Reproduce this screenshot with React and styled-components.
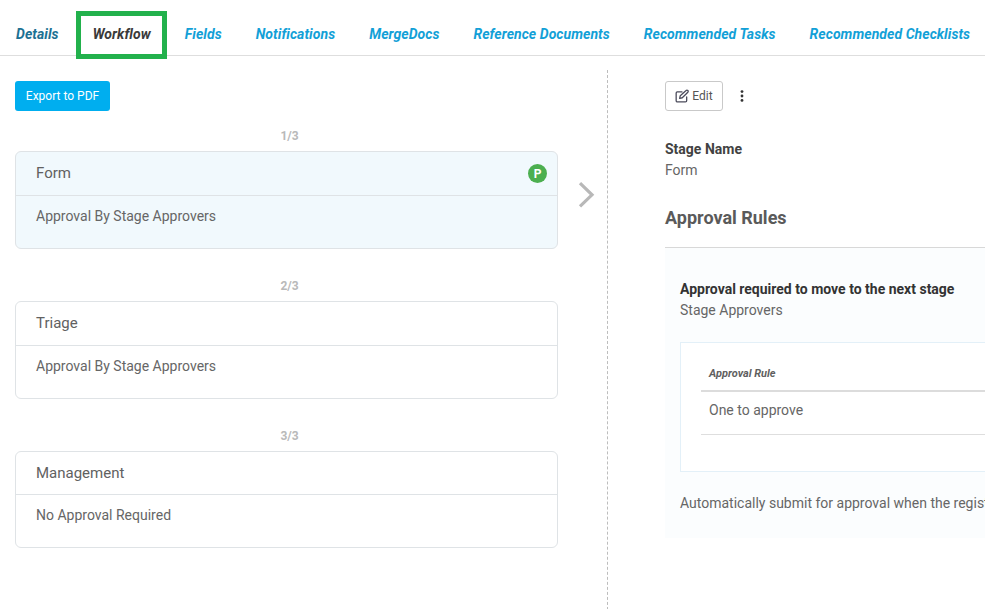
import React from "react"
import styled, { createGlobalStyle } from "styled-components"

const GlobalStyle = createGlobalStyle`
  html, body {
    margin: 0;
    padding: 0;
    background: #fff;
    overflow: hidden;
  }
  body {
    font-family: Roboto, "Liberation Sans", sans-serif;
    font-size: 14px;
    color: #5f6368;
  }
`

const Page = styled.div`
  width: 985px;
  height: 609px;
  overflow: hidden;
`

const TabBar = styled.nav`
  display: flex;
  height: 55px;
  padding-left: 16px;
  border-bottom: 1px solid #dedede;
`

const Tab = styled.a`
  position: relative;
  flex: none;
  margin-right: 34px;
  padding-top: 26px;
  font-size: 14px;
  line-height: 17px;
  font-weight: 700;
  font-style: italic;
  letter-spacing: 0.06px;
  white-space: nowrap;
  color: ${props => props.$color};

  ${props => props.$boxed && `
    &::after {
      content: "";
      position: absolute;
      left: -17px;
      right: -16px;
      top: 11px;
      height: 38px;
      border: 5px solid #22b14c;
    }
  `}
`

const Body = styled.div`
  display: flex;
`

const LeftColumn = styled.section`
  flex: none;
  width: 543px;
  padding: 25px 0 0 15px;
`

const ExportButton = styled.button`
  display: block;
  width: 95px;
  height: 30px;
  padding: 0;
  border: 0;
  border-radius: 3px;
  background: #00aeef;
  color: #fff;
  font-family: inherit;
  font-size: 12px;
`

const Counter = styled.div`
  margin-top: ${props => (props.$first ? "18px" : "30px")};
  margin-bottom: 7px;
  padding-left: 6px;
  height: 15px;
  font-size: 12px;
  line-height: 15px;
  font-weight: 700;
  text-align: center;
  color: #b9b9b9;
`

const StageCard = styled.article`
  box-sizing: border-box;
  height: ${props => (props.$short ? "97px" : "98px")};
  border: 1px solid #dfe3e6;
  border-radius: 6px;
  background: ${props => (props.$active ? "#f1f9fd" : "#fff")};
`

const StageHeader = styled.header`
  box-sizing: border-box;
  display: flex;
  align-items: center;
  justify-content: space-between;
  height: ${props => (props.$short ? "43px" : "44px")};
  padding: 0 10px 0 20px;
  border-bottom: 1px solid #dfe3e6;
`

const StageName = styled.span`
  margin-bottom: ${props => (props.$short ? "0" : "2px")};
  font-size: 15px;
  color: #616161;
`

const Badge = styled.span`
  display: flex;
  align-items: center;
  justify-content: center;
  width: 19px;
  height: 19px;
  border-radius: 50%;
  background: #4caf50;
  color: #fff;
  font-size: 12px;
  font-weight: 700;
`

const StageRule = styled.p`
  margin: 0;
  padding: 12px 20px 0;
  font-size: 14px;
  line-height: 17px;
  color: #666;
`

const ArrowColumn = styled.div`
  flex: none;
  width: 49px;
  padding: 126px 0 0 20px;
  box-sizing: border-box;
`

const DetailPane = styled.section`
  flex: none;
  width: 378px;
  height: 539px;
  margin-top: 14px;
  padding: 11px 0 0 57px;
  border-left: 1px dashed #bdbdbd;
  overflow: hidden;
`

const DetailInner = styled.div`
  width: 400px;
`

const Toolbar = styled.div`
  display: flex;
  align-items: center;
  height: 30px;
`

const EditButton = styled.button`
  display: flex;
  align-items: center;
  justify-content: center;
  gap: 3px;
  width: 58px;
  height: 30px;
  padding: 0;
  border: 1px solid #c9c9c9;
  border-radius: 3px;
  background: #fff;
  color: #555;
  font-family: inherit;
  font-size: 12px;
`

const MoreButton = styled.span`
  display: flex;
  margin-left: 17px;
  color: #333;
`

const FieldLabel = styled.div`
  margin-top: 29px;
  font-size: 14px;
  line-height: 18px;
  font-weight: 700;
  color: #424242;
`

const FieldValue = styled.div`
  margin-top: 3px;
  font-size: 14px;
  line-height: 18px;
  color: #666;
`

const SectionTitle = styled.h2`
  margin: 28px 0 0;
  padding-bottom: 18px;
  border-bottom: 1px solid #d8d8d8;
  font-size: 18px;
  line-height: 22px;
  font-weight: 700;
  color: #5a5a5a;
`

const RulePanel = styled.div`
  padding: 32px 0 0 15px;
  height: 258px;
  background: #fbfdfe;
`

const RuleTitle = styled.div`
  font-size: 14px;
  line-height: 18px;
  font-weight: 700;
  color: #333;
`

const RuleSub = styled.div`
  margin-top: 3px;
  font-size: 14px;
  line-height: 18px;
  color: #666;
`

const RuleBox = styled.div`
  box-sizing: border-box;
  height: 130px;
  margin-top: 23px;
  padding: 0 0 0 20px;
  border: 1px solid #e3f0f8;
  background: #fff;
`

const RuleHeading = styled.div`
  box-sizing: border-box;
  height: 49px;
  padding: 24px 0 0 8px;
  border-bottom: 2px solid #dcdcdc;
  font-size: 11px;
  line-height: 14px;
  font-weight: 700;
  font-style: italic;
  color: #5f5f5f;
`

const RuleCell = styled.div`
  box-sizing: border-box;
  height: 43px;
  padding: 9px 0 0 8px;
  border-bottom: 1px solid #dedede;
  font-size: 14px;
  line-height: 18px;
  color: #666;
`

const AutoNote = styled.div`
  margin-top: 22px;
  font-size: 14px;
  line-height: 18px;
  white-space: nowrap;
  color: #666;
`

const tabs = [
  { label: "Details", color: "#1c7193" },
  { label: "Workflow", color: "#3a3a3a", boxed: true },
  { label: "Fields", color: "#12a0d7" },
  { label: "Notifications", color: "#12a0d7" },
  { label: "MergeDocs", color: "#12a0d7" },
  { label: "Reference Documents", color: "#12a0d7" },
  { label: "Recommended Tasks", color: "#12a0d7" },
  { label: "Recommended Checklists", color: "#12a0d7" }
]

const stages = [
  { name: "Form", rule: "Approval By Stage Approvers", active: true },
  { name: "Triage", rule: "Approval By Stage Approvers" },
  { name: "Management", rule: "No Approval Required", short: true }
]

const Chevron = () => (
  <svg width="17" height="26" viewBox="0 0 17 26" fill="none" stroke="#b8b8b8" strokeWidth="3.2">
    <path d="M2 1.2 L14 12.8 L2 24.4" />
  </svg>
)

const EditIcon = () => (
  <svg width="14" height="14" viewBox="0 0 24 24" fill="none" stroke="#4a4a5a" strokeWidth="2.2" strokeLinecap="round" strokeLinejoin="round">
    <path d="M20 13.5V20a2 2 0 0 1-2 2H4a2 2 0 0 1-2-2V7a2 2 0 0 1 2-2h8" />
    <path d="M19 2.5a2.1 2.1 0 0 1 3 3L12.5 15 8 16l1-4.5z" />
  </svg>
)

const DotsIcon = () => (
  <svg width="4" height="12" viewBox="0 0 4 12" fill="currentColor">
    <circle cx="2" cy="1.6" r="1.4" />
    <circle cx="2" cy="6" r="1.4" />
    <circle cx="2" cy="10.4" r="1.4" />
  </svg>
)

const App = () => (
  <Page>
    <GlobalStyle />
    <TabBar>
      {tabs.map(tab => (
        <Tab key={tab.label} $color={tab.color} $boxed={tab.boxed}>{tab.label}</Tab>
      ))}
    </TabBar>
    <Body>
      <LeftColumn>
        <ExportButton>Export to PDF</ExportButton>
        {stages.map((stage, index) => (
          <React.Fragment key={stage.name}>
            <Counter $first={index === 0}>{index + 1}/3</Counter>
            <StageCard $active={stage.active} $short={stage.short}>
              <StageHeader $short={stage.short}>
                <StageName $short={stage.short}>{stage.name}</StageName>
                {stage.active && <Badge>P</Badge>}
              </StageHeader>
              <StageRule>{stage.rule}</StageRule>
            </StageCard>
          </React.Fragment>
        ))}
      </LeftColumn>
      <ArrowColumn>
        <Chevron />
      </ArrowColumn>
      <DetailPane>
        <DetailInner>
          <Toolbar>
            <EditButton><EditIcon />Edit</EditButton>
            <MoreButton><DotsIcon /></MoreButton>
          </Toolbar>
          <FieldLabel>Stage Name</FieldLabel>
          <FieldValue>Form</FieldValue>
          <SectionTitle>Approval Rules</SectionTitle>
          <RulePanel>
            <RuleTitle>Approval required to move to the next stage</RuleTitle>
            <RuleSub>Stage Approvers</RuleSub>
            <RuleBox>
              <RuleHeading>Approval Rule</RuleHeading>
              <RuleCell>One to approve</RuleCell>
            </RuleBox>
            <AutoNote>Automatically submit for approval when the registration is submitted</AutoNote>
          </RulePanel>
        </DetailInner>
      </DetailPane>
    </Body>
  </Page>
)

export default App
